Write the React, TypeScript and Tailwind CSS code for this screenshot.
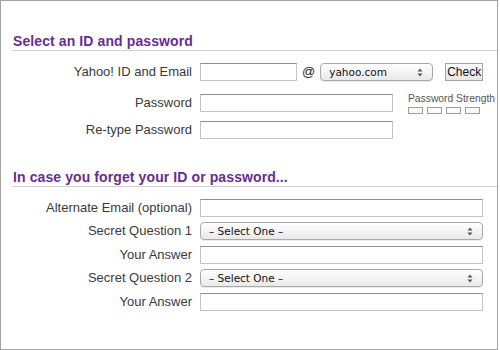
import React from 'react';

const LABEL = 'w-[199px] shrink-0 pr-[8px] text-right text-[13px] leading-[18px] text-[#3a3a3a]';
const INPUT = 'h-[18px] bg-white border border-[#c4c4c4] border-t-[#8e8e8e] outline-none';

function Arrows() {
  return (
    <svg width="6" height="9" viewBox="0 0 6 9" className="shrink-0">
      <path d="M3 0.5 L5.5 3.5 L0.5 3.5 Z" fill="#555" />
      <path d="M3 8.5 L5.5 5.5 L0.5 5.5 Z" fill="#555" />
    </svg>
  );
}

function FakeSelect({ text, className }: { text: string; className: string }) {
  return (
    <div
      className={`flex items-center justify-between h-[18px] rounded-[4px] border border-[#a9a9a9] bg-gradient-to-b from-white to-[#e9e9e9] shadow-[0_1px_0_rgba(0,0,0,0.08)] pl-[8px] pr-[9px] ${className}`}
    >
      <span className="font-['DejaVu_Sans',sans-serif] text-[10.5px] leading-[16px] text-[#111] whitespace-nowrap">
        {text}
      </span>
      <Arrows />
    </div>
  );
}

function SectionTitle({ children, className }: { children: React.ReactNode; className: string }) {
  return (
    <div className={`ml-[11px] border-b border-[#cfcfcf] pb-[1px] ${className}`}>
      <h2 className="pl-[1px] text-[14px] leading-[16px] font-bold tracking-[0.1px] text-[#6a2c8e]">{children}</h2>
    </div>
  );
}

export default function App() {
  return (
    <div className="w-[498px] h-[350px] border border-[#a3a3a3] bg-white font-['Liberation_Sans',Arial,sans-serif] overflow-hidden">
      <SectionTitle className="mt-[32px]">Select an ID and password</SectionTitle>

      {/* ID row */}
      <div className="flex items-center h-[18px] mt-[12px]">
        <label className={LABEL}>Yahoo! ID and Email</label>
        <input className={`${INPUT} w-[97px]`} />
        <span className="ml-[5px] text-[13px] leading-[18px] text-[#222]">@</span>
        <FakeSelect text="yahoo.com" className="ml-[5px] w-[113px]" />
        <button className="ml-[12px] w-[38px] h-[18px] border border-[#a3a3a3] bg-gradient-to-b from-[#fbfbfb] to-[#e6e6e6] text-[12px] leading-[16px] text-[#111]">
          Check
        </button>
      </div>

      {/* Password row */}
      <div className="flex items-start h-[18px] mt-[13px]">
        <label className={LABEL}>Password</label>
        <input type="password" className={`${INPUT} w-[193px]`} />
        <div className="ml-[15px] flex flex-col">
          <span className="text-[10.3px] leading-[10px] text-[#555] whitespace-nowrap">Password Strength</span>
          <div className="flex gap-[4px] mt-[3px]">
            <div className="w-[15px] h-[7px] border border-[#9d9d9d] bg-[#fafafa]" />
            <div className="w-[15px] h-[7px] border border-[#9d9d9d] bg-[#fafafa]" />
            <div className="w-[15px] h-[7px] border border-[#9d9d9d] bg-[#fafafa]" />
            <div className="w-[15px] h-[7px] border border-[#9d9d9d] bg-[#fafafa]" />
          </div>
        </div>
      </div>

      <div className="flex items-center h-[18px] mt-[9px]">
        <label className={LABEL}>Re-type Password</label>
        <input type="password" className={`${INPUT} w-[193px]`} />
      </div>

      <SectionTitle className="mt-[30px]">In case you forget your ID or password...</SectionTitle>

      <div className="flex items-center h-[18px] mt-[12px]">
        <label className={LABEL}>Alternate Email (optional)</label>
        <input className={`${INPUT} w-[283px]`} />
      </div>
      <div className="flex items-center h-[18px] mt-[5px]">
        <label className={LABEL}>Secret Question 1</label>
        <FakeSelect text="– Select One –" className="w-[283px]" />
      </div>
      <div className="flex items-center h-[18px] mt-[6px]">
        <label className={LABEL}>Your Answer</label>
        <input className={`${INPUT} w-[283px]`} />
      </div>
      <div className="flex items-center h-[18px] mt-[5px]">
        <label className={LABEL}>Secret Question 2</label>
        <FakeSelect text="– Select One –" className="w-[283px]" />
      </div>
      <div className="flex items-center h-[18px] mt-[6px]">
        <label className={LABEL}>Your Answer</label>
        <input className={`${INPUT} w-[283px]`} />
      </div>
    </div>
  );
}
